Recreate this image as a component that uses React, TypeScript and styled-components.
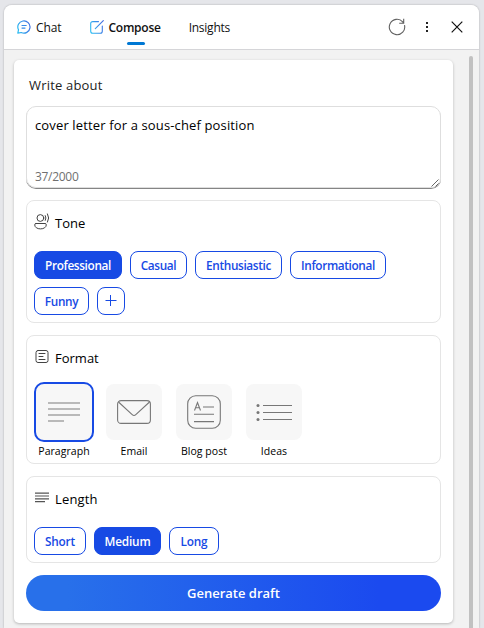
import React from "react";
import styled, { createGlobalStyle } from "styled-components";

const GlobalStyle = createGlobalStyle`
  * { box-sizing: border-box; }
  html, body { margin: 0; height: 100%; overflow: hidden; }
  body { background: #e5e6ea; font-family: "Open Sans", "Noto Sans", sans-serif; color: #111; }
  button { font-family: inherit; margin: 0; padding: 0; }
`;

const Shell = styled.div`
  height: 628px;
  padding: 5px 5px 0 4px;
`;

const Panel = styled.div`
  height: 623px;
  border-radius: 8px 8px 0 0;
  overflow: hidden;
  background: #f2f2f2;
  box-shadow: 0 0 2px rgba(0, 0, 0, 0.3);
  display: flex;
  flex-direction: column;
`;

const Header = styled.header`
  height: 45px;
  flex: none;
  display: flex;
  align-items: center;
  justify-content: space-between;
  background: #fff;
  border-bottom: 1px solid #d5d5d8;
  padding: 0 7px 0 13px;
`;

const Tabs = styled.nav`
  display: flex;
  align-items: center;
`;

const Tab = styled.div<{ $gap?: number; $active?: boolean }>`
  position: relative;
  display: flex;
  align-items: center;
  height: 44px;
  margin-left: ${(p) => p.$gap ?? 0}px;
  font-size: 12px;
  font-weight: ${(p) => (p.$active ? 600 : 400)};
  svg { margin-right: ${(p) => (p.$active ? 4 : 5)}px; }
  &::after {
    content: "";
    display: ${(p) => (p.$active ? "block" : "none")};
    position: absolute;
    left: 37px;
    bottom: 4px;
    width: 18px;
    height: 3px;
    border-radius: 2px;
    background: #0078d4;
  }
`;

const Label = styled.span<{ $ls?: number }>`
  white-space: nowrap;
  letter-spacing: ${(p) => p.$ls ?? 0}px;
`;

const Actions = styled.div`
  display: flex;
  align-items: center;
`;

const IconButton = styled.button`
  border: 0;
  background: none;
  width: 30px;
  height: 30px;
  display: grid;
  place-items: center;
`;

const Body = styled.div`
  flex: 1;
  display: flex;
  justify-content: space-between;
  padding: 10px 2px 0 10px;
`;

const Card = styled.main`
  width: 439px;
  height: 563px;
  background: #fff;
  border-radius: 5px;
  box-shadow: 0 1px 3px rgba(0, 0, 0, 0.25);
  padding: 0 12px;
`;

const ScrollBar = styled.div`
  width: 4px;
  height: 600px;
  margin-top: -4px;
  margin-right: 4px;
  border-radius: 2px 2px 0 0;
  background: #c1c1c1;
`;

const Title = styled.h1`
  margin: 0;
  height: 46px;
  padding: 14px 3px 0;
  font-size: 13px;
  line-height: 22px;
  font-weight: 400;
  color: #222;
`;

const TextBox = styled.div`
  height: 82px;
  border: 1px solid #dedede;
  border-radius: 10px;
  box-shadow: 0 1px 0 #858585;
  padding: 7px 1px 0 8px;
  display: flex;
  flex-direction: column;
  justify-content: space-between;
  font-size: 13px;
  line-height: 22px;
  color: #000;
`;

const BoxFooter = styled.div`
  display: flex;
  align-items: flex-end;
  justify-content: space-between;
  font-size: 12px;
  line-height: 21px;
  color: #707070;
`;

const Section = styled.section<{ $h: number }>`
  height: ${(p) => p.$h}px;
  margin-top: 12px;
  border: 1px solid #e5e5e5;
  border-radius: 8px;
  padding: 10px 7px 0;
`;

const SectionTitle = styled.h2`
  margin: 0;
  height: 23px;
  display: flex;
  align-items: center;
  gap: 5px;
  font-size: 13px;
  font-weight: 400;
  color: #000;
  svg { margin-top: -2px; }
`;

const Chips = styled.div`
  display: flex;
  flex-wrap: wrap;
  gap: 8px;
  margin-top: 17px;
`;

const Chip = styled.button<{ $w: number; $on?: boolean }>`
  width: ${(p) => p.$w}px;
  height: 28px;
  display: flex;
  align-items: center;
  justify-content: center;
  border: 1px solid #174ae4;
  border-radius: 8px;
  background: ${(p) => (p.$on ? "#174ae4" : "#fff")};
  color: ${(p) => (p.$on ? "#fff" : "#174ae4")};
  font-size: 11.8px;
  font-weight: 600;
`;

const Formats = styled.div`
  display: flex;
  gap: 10px;
  margin-top: 13px;
`;

const Format = styled.div`
  width: 60px;
  display: flex;
  flex-direction: column;
  align-items: center;
  font-size: 10.5px;
  line-height: 16px;
  color: #000;
`;

const Tile = styled.div<{ $on?: boolean }>`
  width: ${(p) => (p.$on ? 60 : 56)}px;
  height: ${(p) => (p.$on ? 60 : 56)}px;
  margin: ${(p) => (p.$on ? "0 0 1px" : "2px 0 3px")};
  border: ${(p) => (p.$on ? "2px solid #174ae4" : "0")};
  border-radius: ${(p) => (p.$on ? 10 : 8)}px;
  background: #f7f7f7;
  display: grid;
  place-items: center;
`;

const Generate = styled.button`
  width: 100%;
  height: 36px;
  margin-top: 12px;
  border: 0;
  border-radius: 18px;
  background: linear-gradient(90deg, #2870ea 10%, #1b4aef 85%);
  color: #fff;
  font-size: 13px;
  font-weight: 600;
`;

const BlueGradient = ({ id }: { id: string }) => (
  <defs>
    <linearGradient id={id} gradientUnits="userSpaceOnUse" x1="0" y1="9" x2="14" y2="4">
      <stop offset="0" stopColor="#2bbcf2" />
      <stop offset="1" stopColor="#4268e0" />
    </linearGradient>
  </defs>
);

const ChatIcon = () => (
  <svg width="14" height="14" viewBox="0 0 14 14" fill="none" stroke="url(#chat)" strokeWidth="1.2" strokeLinecap="round">
    <BlueGradient id="chat" />
    <path d="M.8 13.2 1.5 9.8A6.1 6.1 0 1 1 4.3 12.5Z" strokeLinejoin="round" />
    <path d="M5 5.5h4.2M5 8.1h3" stroke="#378ce8" />
  </svg>
);

const ComposeIcon = () => (
  <svg width="14" height="14" viewBox="0 0 14 14" fill="none" stroke="url(#compose)" strokeWidth="1.1" strokeLinecap="round">
    <BlueGradient id="compose" />
    <path d="M8.5 1.6H2.7A2 2 0 0 0 .7 3.6v7.6a2 2 0 0 0 2 2h7.6a2 2 0 0 0 2-2V6M13.3.7 5.3 8.7" />
  </svg>
);

const RefreshIcon = () => (
  <svg width="18" height="18" viewBox="0 0 18 18" fill="none" stroke="#606060" strokeWidth="1.1">
    <path d="M16.5 7.2A7.7 7.7 0 1 1 14.7 3.8L15.6 5M15.7.8V5.2H11.2" />
  </svg>
);

const MoreIcon = () => (
  <svg width="4" height="12" viewBox="0 0 4 12" fill="#222">
    <rect x="1" y="1" width="2" height="2" />
    <rect x="1" y="5" width="2" height="2" />
    <rect x="1" y="9" width="2" height="2" />
  </svg>
);

const CloseIcon = () => (
  <svg width="12" height="12" viewBox="0 0 12 12" stroke="#111" strokeWidth="1.2">
    <path d="M.7.7 11.3 11.3M11.3.7.7 11.3" />
  </svg>
);

const GripIcon = () => (
  <svg width="8" height="8" viewBox="0 0 8 8" stroke="#555" strokeWidth="0.9">
    <path d="M.5 7.5 7.5.5M4.5 7.5l3-3" />
  </svg>
);

const ToneIcon = () => (
  <svg width="16" height="17" viewBox="0 0 16 17" fill="none" stroke="#444" strokeWidth="1" strokeLinecap="round">
    <circle cx="6.4" cy="5" r="3.4" />
    <path d="M2 10.5h9a1.3 1.3 0 0 1 1.3 1.3c0 2.5-2.6 4.1-5.8 4.1S.7 14.3.7 11.8A1.3 1.3 0 0 1 2 10.5ZM11.3 2.6a5 5 0 0 1 0 4.8M13.5.9a8 8 0 0 1 0 8.2" />
  </svg>
);

const FormatIcon = () => (
  <svg width="16" height="15" viewBox="0 0 16 15" fill="none" stroke="#444" strokeWidth="1" strokeLinecap="round">
    <rect x="2" y="1.5" width="12" height="12" rx="2" />
    <path d="M5 4.5h6M5 7.5h4M5 10.5h6" />
  </svg>
);

const LengthIcon = () => (
  <svg width="16" height="11" viewBox="0 0 16 11" stroke="#555" strokeWidth="1.2">
    <path d="M1 1.2h14M1 4h14M1 6.8h14M1 9.6h10" />
  </svg>
);

const PlusIcon = () => (
  <svg width="12" height="12" viewBox="0 0 12 12" stroke="#174ae4">
    <path d="M.5 5.5h11M5.5 0v11" />
  </svg>
);

const ParagraphArt = () => (
  <svg width="32" height="22" viewBox="0 0 32 22" stroke="#b9b9b9" strokeWidth="2">
    <path d="M0 2h32M0 8h32M0 14h32M0 20h16" />
  </svg>
);

const EmailArt = () => (
  <svg width="34" height="24" viewBox="0 0 34 24" fill="none" stroke="#777" strokeWidth="1.1">
    <rect x=".6" y=".6" width="32.8" height="22.8" rx="3.5" />
    <path d="M1.5 2 15.2 14.7q1.8 1.6 3.6 0L32.5 2" />
  </svg>
);

const BlogArt = () => (
  <svg width="34" height="34" viewBox="0 0 34 34" fill="none" stroke="#777" strokeWidth="1.1">
    <rect x=".7" y=".7" width="32.6" height="32.6" rx="8" />
    <path d="m7.5 15.5 3-8 3 8M8.5 12.8h4M16 12h11M7 19.3h20M7 26.6h20" />
  </svg>
);

const IdeasArt = () => (
  <svg width="36" height="18" viewBox="0 0 36 18" fill="#777" stroke="#777" strokeWidth="1">
    <path d="M7 2.5h29M7 9.5h29M7 16.5h29" />
    <g stroke="none">
      <circle cx="2" cy="2.5" r="1.5" />
      <circle cx="2" cy="9.5" r="1.5" />
      <circle cx="2" cy="16.5" r="1.5" />
    </g>
  </svg>
);

const tones = [
  { name: "Professional", width: 88, on: true },
  { name: "Casual", width: 57 },
  { name: "Enthusiastic", width: 87 },
  { name: "Informational", width: 96 },
  { name: "Funny", width: 55 },
];

const lengths = [
  { name: "Short", width: 52 },
  { name: "Medium", width: 67, on: true },
  { name: "Long", width: 50 },
];

const formats = [
  { name: "Paragraph", art: <ParagraphArt />, on: true },
  { name: "Email", art: <EmailArt /> },
  { name: "Blog post", art: <BlogArt /> },
  { name: "Ideas", art: <IdeasArt /> },
];

export default function App() {
  return (
    <Shell>
      <GlobalStyle />
      <Panel>
        <Header>
          <Tabs>
            <Tab><ChatIcon /><Label $ls={-0.1}>Chat</Label></Tab>
            <Tab $gap={29} $active><ComposeIcon /><Label $ls={-0.25}>Compose</Label></Tab>
            <Tab $gap={28}><Label $ls={-0.25}>Insights</Label></Tab>
          </Tabs>
          <Actions>
            <IconButton aria-label="Refresh"><RefreshIcon /></IconButton>
            <IconButton aria-label="More"><MoreIcon /></IconButton>
            <IconButton aria-label="Close"><CloseIcon /></IconButton>
          </Actions>
        </Header>
        <Body>
          <Card>
            <Title><Label $ls={0.18}>Write about</Label></Title>
            <TextBox>
              <Label $ls={0.14}>cover letter for a sous-chef position</Label>
              <BoxFooter><Label $ls={-0.3}>37/2000</Label><GripIcon /></BoxFooter>
            </TextBox>
            <Section $h={123}>
              <SectionTitle><ToneIcon /><Label>Tone</Label></SectionTitle>
              <Chips>
                {tones.map((t) => (
                  <Chip key={t.name} $w={t.width} $on={t.on}><Label $ls={-0.36}>{t.name}</Label></Chip>
                ))}
                <Chip $w={28} aria-label="Add tone"><PlusIcon /></Chip>
              </Chips>
            </Section>
            <Section $h={129}>
              <SectionTitle><FormatIcon /><Label>Format</Label></SectionTitle>
              <Formats>
                {formats.map((f) => (
                  <Format key={f.name}>
                    <Tile $on={f.on}>{f.art}</Tile>
                    <Label $ls={0.05}>{f.name}</Label>
                  </Format>
                ))}
              </Formats>
            </Section>
            <Section $h={87}>
              <SectionTitle><LengthIcon /><Label $ls={0.15}>Length</Label></SectionTitle>
              <Chips>
                {lengths.map((l) => (
                  <Chip key={l.name} $w={l.width} $on={l.on}><Label $ls={-0.15}>{l.name}</Label></Chip>
                ))}
              </Chips>
            </Section>
            <Generate><Label>Generate draft</Label></Generate>
          </Card>
          <ScrollBar />
        </Body>
      </Panel>
    </Shell>
  );
}
